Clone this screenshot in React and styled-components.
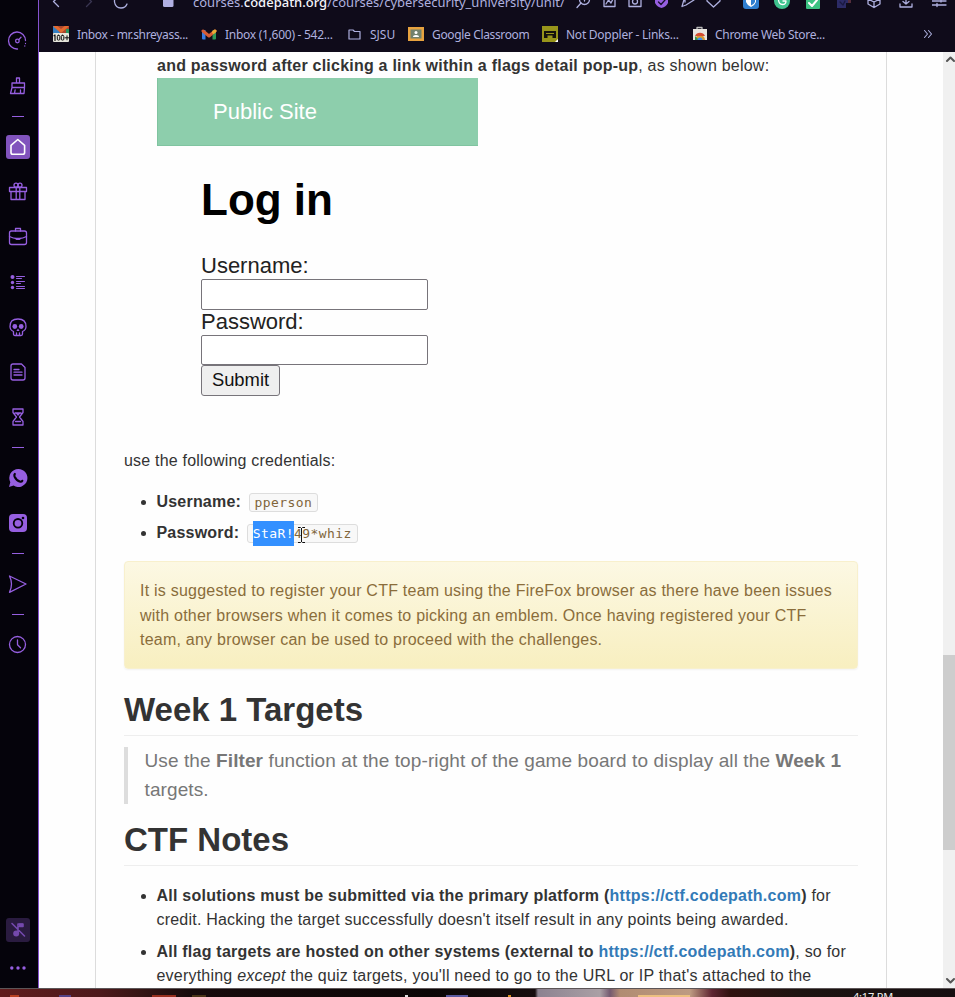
import React from "react";
import styled, { createGlobalStyle } from "styled-components";

const Global = createGlobalStyle`
  * { box-sizing: border-box; }
  html, body { margin: 0; padding: 0; overflow: hidden; background: #05030b; }
`;

const Screen = styled.div`
  width: 955px; height: 997px; display: flex; flex-direction: column; overflow: hidden;
  font-family: "Liberation Sans", Arial, sans-serif;
`;
const Browser = styled.div`
  display: flex; height: 988px; flex: none; min-height: 0;
`;
const Sidebar = styled.nav`
  width: 39px; flex: none; background: #05030b; border-right: 1px solid #8552ce;
  padding: 18.5px 2px 8px 0; display: flex; flex-direction: column; align-items: center;
`;
const SideItem = styled.div`
  height: 45px; width: 36px; flex: none; display: flex; align-items: center; justify-content: center;
`;
const Tile = styled.div`
  width: 24px; height: 24px; border-radius: 3px; background: ${(p) => p.$bg || "transparent"};
  color: ${(p) => p.$fg || "#965fe0"};
`;
const SideDivider = styled.div`
  height: 16px; flex: none; display: flex; align-items: center;
  &::after { content: ""; width: 12px; height: 1px; background: #965fe0; }
`;
const SideBottom = styled.div`
  margin-top: auto; display: flex; flex-direction: column; gap: 14px;
`;
const Svg = styled.svg`
  display: block; width: ${(p) => p.$w || 24}px; height: ${(p) => p.$h || 24}px; flex: none;
  fill: none; stroke: currentColor; stroke-width: 1.3; stroke-linejoin: round; stroke-linecap: round;
`;

const Main = styled.div`flex: 1; min-width: 0; display: flex; flex-direction: column;`;
const Toolbar = styled.header`
  height: 52px; flex: none; background: #0f0b1a; color: #aeb0df;
  font-family: "Noto Sans", "Open Sans", sans-serif;
`;
const AddressRow = styled.div`
  height: 14px; display: flex; align-items: flex-start; overflow: hidden;
`;
const TopSlot = styled.div`
  width: ${(p) => p.$w}px; height: 14px; flex: none; color: ${(p) => p.$fg || "#aeb0df"};
  transform: ${(p) => (p.$flip ? "scaleX(-1)" : "none")};
`;
const Url = styled.div`
  width: 383px; flex: none; font-size: 13px; line-height: 20px; margin-top: -8px; white-space: nowrap;
  letter-spacing: ${(p) => p.$ls}px;
  b { font-weight: 500; color: #f4f4fb; }
`;
const Bookmarks = styled.div`
  height: 38px; display: flex; align-items: center; padding: 2px 0 0 14px;
`;
const Bookmark = styled.div`
  width: ${(p) => p.$w}px; flex: none; display: flex; align-items: center; gap: 8px;
  white-space: nowrap; font-size: 12px; letter-spacing: ${(p) => p.$ls || 0}px;
`;

const Viewport = styled.div`flex: 1; min-height: 0; display: flex; background: #fefefe;`;
const PageArea = styled.div`flex: 1; min-width: 0; padding-left: 56px; overflow: hidden;`;
const Paper = styled.article`
  width: 792px; height: 936px; border: solid #dcdcdc; border-width: 0 1px;
  padding: 2px 28px 0; color: #333; font-size: 16px; letter-spacing: 0.2px; overflow: hidden;
`;
const Line = styled.div`
  height: ${(p) => p.$h || 24}px; line-height: ${(p) => p.$h || 24}px; white-space: nowrap;
  letter-spacing: ${(p) => p.$ls ?? 0.2}px;
`;
const Indented = styled.div`padding-left: 33px;`;
const LoginShot = styled.div`width: 321px; height: 352px; letter-spacing: 0; color: #222;`;
const SiteBanner = styled.div`
  height: 68px; line-height: 68px; padding-left: 55px; font-size: 22px; color: #fff;
  background: #8dceac; border: solid #80c4a0; border-width: 0 0 1px 1px;
`;
const LoginForm = styled.div`padding: 26px 0 0 44px; display: flex; flex-direction: column; align-items: flex-start;`;
const LoginTitle = styled.div`
  font-size: 44px; line-height: 56px; height: 81px; font-weight: bold; color: #000; letter-spacing: ${(p) => p.$ls}px;
`;
const FieldLabel = styled.label`font-size: 22px; line-height: ${(p) => p.$lh}px; height: ${(p) => p.$h}px;`;
const Field = styled.div`
  width: 226.5px; height: ${(p) => p.$h}px; border: 1px solid #77747a; border-radius: 2px; background: #fff;
`;
const SubmitButton = styled.div`
  width: 79px; height: 31px; line-height: 28px; text-align: center; font-size: 18.4px; color: #111;
  border: 1px solid #77747a; border-radius: 3px; background: #efefef;
`;
const Item = styled.div`
  position: relative; padding-left: 32.5px; margin-bottom: ${(p) => p.$mb || 0}px;
  &::before {
    content: ""; position: absolute; left: 17px; top: 10px; width: 5px; height: 5px;
    border-radius: 50%; background: #333;
  }
`;
const Code = styled.code`
  display: inline-block; height: 19px; line-height: 18px; padding: 0 5px; margin-left: ${(p) => p.$ml}px;
  border: 1px solid #ddd; border-radius: 3px; background: #f8f8f8; color: #80653a;
  font: 13px/18px "DejaVu Sans Mono", monospace; letter-spacing: ${(p) => p.$ls}px; vertical-align: 0;
  position: relative;
`;
const Selected = styled.span`background: #3390ff; color: #fff; padding: 5px 0 5px; line-height: 18px;`;
const TextCursor = styled.svg`
  position: absolute; left: 49px; top: 2px; width: 9px; height: 16px; fill: none; stroke: #111; stroke-width: 1;
`;
const Notice = styled.div`
  height: 108px; margin-top: 16px; padding: 17px 15px; color: #8a6d3b; border-radius: 4px;
  background: linear-gradient(#fcf8e3, #f8efc0); border: 1px solid #f8f0cd;
  box-shadow: 0 1px 2px rgba(0,0,0,.05); 
`;
const Heading = styled.h1`
  margin: ${(p) => p.$mt}px 0 0; height: 52px; line-height: 51px; font-size: 33px; font-weight: bold;
  color: #333; border-bottom: 1px solid #eee; white-space: nowrap; letter-spacing: ${(p) => p.$ls}px;
`;
const Quote = styled.blockquote`
  margin: 11px 0 0; height: 57px; padding-left: 16.5px; border-left: 4px solid #ddd; color: #777; font-size: 19px;
`;
const Link = styled.b`color: #337ab7;`;
const Notes = styled.div`margin-top: ${(p) => p.$mt ?? 18}px;`;
const Scrollbar = styled.div`
  width: 12px; flex: none; background: #f0f0f0; color: #555; display: flex; flex-direction: column;
  justify-content: space-between;
`;
const Thumb = styled.div`height: 195px; background: #cdcdcd; margin: 590px 0 auto;`;

const Taskbar = styled.footer`
  height: 9px; flex: none; border-top: 1px solid #5c5557; overflow: hidden; display: flex;
  background: linear-gradient(90deg, #601c1d 0, #4d191b 100px, #351514 140px, #170b0c 190px, #0b0606 430px,
    #160d0e 535px, #8c8290 538px, #aaa0a5 600px, #745a70 610px, #b18c72 620px, #bd9b82 690px, #5e2431 712px,
    #30120f 730px, #1d1411 800px, #150e10 955px);
  padding-left: 10px; color: #eee; font: 11px/14px "Noto Sans", sans-serif;
`;
const TaskMark = styled.div`
  width: ${(p) => p.$w}px; height: 2px; margin: 6px ${(p) => p.$mr}px 0 0; background: ${(p) => p.$c}; flex: none;
`;
const Clock = styled.span`white-space: nowrap; padding-top: 1px; letter-spacing: -0.2px;`;

const f = { fill: "currentColor", stroke: "none" };
const side = {
  gauge: <><path d="M11.500 20A8.500 8.500 0 1 1 19.500 11.500" /><path d="M19.500 14.500v.1M18.800 17v.1" /><circle cx="11.400" cy="12" r="1.800" /><path d="m12.800 10.600 2.200-2.300" /></>,
  broom: <><path d="M10.500 9V4h3v5M6 9h12.500v4.500H6zM6 13.500 4.500 19.500h13.500l.5-6M8.500 19.500l.6-3.500M14.500 19.500V16" /></>,
  home: <><path d="M5 10.300 11.800 4.500l6.800 5.800v7.200q0 1.800-1.800 1.800h-10Q5 19.300 5 17.500z" strokeWidth="1.600" /></>,
  gift: <><path d="M3.500 7.500h17v4h-17zM5 11.500v8h14v-8M10.200 7.500v12M13.800 7.500v12" /><circle cx="10" cy="5.200" r="2" /><circle cx="14" cy="5.200" r="2" /></>,
  work: <><rect x="3.500" y="6" width="17" height="13.500" rx="2" /><path d="M9.500 6V3.500h5V6M3.500 11.500q4 2 7 2h3q3 0 7-2" /><path d="M10.500 14h3" strokeWidth="2" /></>,
  list: <><g {...f}><circle cx="6.500" cy="7" r="2" /><circle cx="6.500" cy="12.500" r="1.700" /><circle cx="6.500" cy="17.500" r="1.700" /></g><path d="M10.500 6.500h8M10.500 8.500h5M10.500 11.500h8M10.500 13.500h4M10.500 16.500h8M10.500 18.500h8" strokeWidth="1" /></>,
  skull: <><path d="M7.500 19v-2.500Q4 15 4 11.500 4 4 12 4t8 7.500q0 3.500-3.500 5V19q0 1.500-1.500 1.500H9q-1.500 0-1.500-1.500z" /><circle cx="8.800" cy="11.500" r="2.400" {...f} /><circle cx="15.200" cy="11.500" r="2.400" {...f} /><path d="m12 13.500 1.600 2.400h-3.200z" {...f} /><path d="M10.500 18v2M13.500 18v2" /></>,
  doc: <><path d="M7 4h8.500L19 7.500V18q0 2-2 2H7q-2 0-2-2V6q0-2 2-2zM8 9.500h5M8 12.200h8M8 15h8" /></>,
  hour: <><path d="M7 4h10v3.500L13.500 12l3.500 4.500V20H7v-3.500l3.500-4.500L7 7.500zM9 8h6M9.500 16.500h5" /><path d="m9.500 8 2.500 3 2.500-3z" {...f} /></>,
  phone: <><path d="M12.300 3a9 9 0 1 1-4.700 16.600L3 21l1.300-4.800A9 9 0 0 1 12.300 3z" {...f} /><path d="M8.800 8q-.8.800-.2 2.600 1.700 4 5.700 5.100 1.400.2 2-.9" stroke="#05030b" strokeWidth="2.200" /></>,
  camera: <><rect x="3" y="3" width="18" height="18" rx="4" {...f} /><circle cx="12" cy="12.300" r="4.300" stroke="#05030b" strokeWidth="1.800" /><circle cx="17" cy="7" r="1.300" fill="#05030b" stroke="none" /></>,
  send: <path d="M3.500 4 20 12 3.500 20.300Q7.500 12 3.500 4z" />,
  clock: <><circle cx="11.500" cy="11.500" r="8" /><path d="M11.500 7v4.800l3 3" /></>,
  mute: <><path d="M12 14V6h5v2.500h-3.500M6 5.500l12.500 12.500" strokeWidth="1.600" /><path d="M13 5.500h4v3.500h-4z" {...f} /><circle cx="10.200" cy="15.500" r="3" {...f} /></>,
  dots: <g {...f}><circle cx="5.800" cy="12" r="1.700" /><circle cx="12" cy="12" r="1.700" /><circle cx="18" cy="12" r="1.700" /></g>,
};
const sideItems = ["gauge", "broom", "-", "home", "gift", "work", "list", "skull", "doc", "hour", "-", "phone", "camera", "-", "send", "-", "clock"];

const SideIcon = ({ name, bg, fg }) => (
  <Tile $bg={bg} $fg={fg}><Svg viewBox="0 0 24 24">{side[name]}</Svg></Tile>
);

const top = {
  back: <path d="m7.500-4-6 5.500L6.500 6.500" />,
  reload: <path d="M1.500-2v4q1 6 6.500 6 4.500 0 6-4" />,
  page: <rect x="0" y="-4" width="10.500" height="11" rx="1.500" {...f} />,
  search: <><circle cx="8.500" cy="-.5" r="5" /><path d="m5 3-4 4.500M8.500-2v3" /></>,
  image: <><path d="M1-2v8.500h11V-2" /><path d="m3 4 2.500-4 2.500 3L10-1" /></>,
  snap: <><path d="M1-2v8.500h12V-2" /><circle cx="7" cy="1.500" r="2.500" /></>,
  shield: <><path d="M0-3h13v6Q11 7 6.500 8 2 7 0 3z" {...f} /><path d="m3.500 2 2.500 2.500 4-4.500" stroke="#17102a" /></>,
  plane: <path d="m1 6.500 2-7M1 6.500l4-1.500 8-5M4-1v3" />,
  heart: <path d="M1-2v3l6.500 6L14 1v-3" />,
  bit: <><rect y="-6" width="16" height="15" rx="3" {...f} /><path d="M3-2h10v4q-1 3-5 5-4-2-5-5z" fill="#fff" stroke="none" /><path d="M8-2h4v4q-1 2-4 3.500z" {...f} /></>,
  gram: <><circle cx="8" cy="1" r="8" {...f} /><path d="M4.500-1q0 5.500 4 5.500Q12 4.500 12 1H9" stroke="#fff" /></>,
  check: <><rect y="-3" width="14" height="12" rx="1" {...f} /><path d="m3 3 3 3 5-6" stroke="#fff" strokeWidth="2" /></>,
  dark: <><path d="M0-3h14v6H9v5H0z" {...f} /><path d="m3 2 3 3 2-4" stroke="#1a1940" /><path d="M11-3h3v6h-3z" fill="#542d3c" stroke="none" /></>,
  cube: <path d="M1-2v6l6 3.500L13 4v-6M1-1l6 3 6-3M7 2v5.500" />,
  down: <path d="M1 4v3h12V4M7-2v6M4 1.500 7 4l3-2.500" />,
  tune: <path d="M0 1h14M0 5h14M9-1v3M5 3.500v3" />,
};
const TopIcon = ({ name, w, fg }) => (
  <TopSlot $w={w} $fg={fg}><Svg $w={16} $h={14} viewBox="0 0 16 14">{top[name]}</Svg></TopSlot>
);

const marks = {
  mail: <><path d="M1 4h3.500v9.500H2q-1 0-1-1z" fill="#367be2" stroke="none" /><path d="M11.500 4H15v8.500q0 1-1 1h-2.500z" fill="#2d9a58" stroke="none" /><path d="M2 5 8 10l6-5" stroke="#d65c35" strokeWidth="3" /><path d="M12.500 6.300 14 5" stroke="#e9ac35" strokeWidth="3" /></>,
  badge: <><path d="M0 0h16v8H0z" fill="#a9472d" stroke="none" /><path d="M0 0h3l4 7H0z" fill="#347fc1" stroke="none" /><path d="m2 0 6 5 6-5" stroke="#e36a2f" strokeWidth="3" /><path d="M13 3h3v5h-3z" fill="#28945c" stroke="none" /><rect y="7" width="16" height="9" rx="1" fill="#e6e6dc" stroke="none" /><path d="M2 9v5.500M1 9.700 2 9" stroke="#111" strokeWidth="1.200" /><rect x="4.300" y="9.300" width="2.500" height="4.800" rx="1" stroke="#111" strokeWidth="1" /><rect x="8.300" y="9.300" width="2.500" height="4.800" rx="1" stroke="#111" strokeWidth="1" /><path d="M12 11.800h4M14 9.800v4" stroke="#111" strokeWidth="1" /></>,
  folder: <path d="M1 4h4l1.500 1.500H12V13H1z" strokeWidth="1.200" />,
  room: <><rect y="1" width="16" height="14" fill="#e7a23f" stroke="none" /><rect x="2.500" y="3.500" width="11" height="9" fill="#71816e" stroke="none" /><circle cx="8" cy="6.500" r="1.500" fill="#fff" stroke="none" /><path d="M5 11q0-2 3-2t3 2z" fill="#fff" stroke="none" /></>,
  doppler: <><rect width="16" height="16" fill="#98951b" stroke="none" /><path d="M2 5h12v7h-3.500V9.500h-5V12H2z" fill="#15120d" stroke="none" /><path d="M4 7h8v1H4z" fill="#98951b" stroke="none" /><path d="M16 13v3h-3z" fill="#fff" stroke="none" /></>,
  store: <><path d="M5 4V1.500h5V4" stroke="#bbb" /><path d="M1 3h14v11H1z" fill="#e7e5e0" stroke="none" /><path d="M3 14a5 5 0 0 1 10 0z" fill="#d79a35" stroke="none" /><path d="M3 10a5.500 5.500 0 0 1 10 0z" fill="#d44b30" stroke="none" /><path d="M3 14v-4l4 4z" fill="#359450" stroke="none" /><path d="M5.500 14a2.500 2.500 0 0 1 5 0z" fill="#368df0" stroke="none" /></>,
};
const bookmarks = [
  ["badge", "Inbox - mr.shreyass...", 148, 16, -0.33], ["mail", "Inbox (1,600) - 542...", 147, 16, -0.27],
  ["folder", "SJSU", 60, 14, 0], ["room", "Google Classroom", 134, 16, -0.35],
  ["doppler", "Not Doppler - Links...", 150, 16, -0.25], ["store", "Chrome Web Store...", 231, 15, -0.3],
];

const site = <Link>https://ctf.codepath.com</Link>;

export default function App() {
  return (
    <Screen>
      <Global />
      <Browser>
        <Sidebar>
          {sideItems.map((n, i) => n === "-" ? <SideDivider key={i} /> : (
            <SideItem key={i}><SideIcon name={n} bg={n === "home" ? "#8153bd" : undefined} fg={n === "home" ? "#fff" : undefined} /></SideItem>
          ))}
          <SideBottom><SideIcon name="mute" bg="#2a1b40" fg="#7449ad" /><SideIcon name="dots" /></SideBottom>
        </Sidebar>
        <Main>
          <Toolbar>
            <AddressRow>
              <TopSlot $w={13} />
              <TopIcon name="back" w={33} />
              <TopSlot $w={28} $fg="#393551"><Svg $w={16} $h={14} viewBox="0 0 16 14"><path d="m.5-4 6 5.500L1.500 6.500" /></Svg></TopSlot>
              <TopIcon name="reload" w={50} />
              <TopIcon name="page" w={30} fg="#b1b0e2" />
              <Url $ls={0}>courses.<b>codepath.org</b>/courses/cybersecurity_university/unit/</Url>
              <TopIcon name="search" w={27} /><TopIcon name="image" w={25} /><TopIcon name="snap" w={27} />
              <TopIcon name="shield" w={26} fg="#965fe0" /><TopIcon name="plane" w={25} /><TopIcon name="heart" w={37} />
              <TopIcon name="bit" w={31} fg="#2f7fd0" /><TopIcon name="gram" w={32} fg="#3fc38e" />
              <TopIcon name="check" w={31} fg="#3dc282" /><TopIcon name="dark" w={30} fg="#2c2b66" />
              <TopIcon name="cube" w={32} /><TopIcon name="down" w={33} /><TopIcon name="tune" w={16} />
            </AddressRow>
            <Bookmarks>
              {bookmarks.map(([icon, text, w, iw, ls]) => (
                <Bookmark key={text} $w={w} $ls={ls}>
                  <Svg $w={iw} $h={16} viewBox={`0 0 ${iw} 16`}>{marks[icon]}</Svg>{text}
                </Bookmark>
              ))}
              <Svg $w={12} $h={12} viewBox="0 0 12 12"><path d="m1.500 2.500 3 3.500-3 3.500M5.500 2.500l3 3.500-3 3.500" strokeWidth="1.100" /></Svg>
            </Bookmarks>
          </Toolbar>
          <Viewport>
            <PageArea>
              <Paper>
                <Indented>
                  <Line $ls={0.23}><b>and password after clicking a link within a flags detail pop-up</b>, as shown below:</Line>
                  <LoginShot>
                    <SiteBanner>Public Site</SiteBanner>
                    <LoginForm>
                      <LoginTitle $ls={0}>Log in</LoginTitle>
                      <FieldLabel $lh={26} $h={26}>Username:</FieldLabel><Field $h={31} />
                      <FieldLabel $lh={24} $h={25}>Password:</FieldLabel><Field $h={30} />
                      <SubmitButton>Submit</SubmitButton>
                    </LoginForm>
                  </LoginShot>
                </Indented>
                <Notes $mt={19}>
                  <Line>use the following credentials:</Line>
                </Notes>
                <Notes $mt={17}>
                  <Item $mb={7}><Line><b>Username:</b><Code $ml={7.5} $ls={0.42}>pperson</Code></Line></Item>
                  <Item><Line><b>Password:</b><Code $ml={7.5} $ls={0.42}><Selected>StaR!</Selected>49*whiz
                    <TextCursor viewBox="0 0 9 16"><path d="M1 .5h2.500l1 1 1-1H8M4.500 1v14M1 15.500h2.500l1-1 1 1H8" /></TextCursor>
                  </Code></Line></Item>
                </Notes>
                <Notice>
                  <Line $h={24.5} $ls={0.23}>It is suggested to register your CTF team using the FireFox browser as there have been issues</Line>
                  <Line $h={24.5} $ls={0.23}>with other browsers when it comes to picking an emblem. Once having registered your CTF</Line>
                  <Line $h={24.5} $ls={0.23}>team, any browser can be used to proceed with the challenges.</Line>
                </Notice>
                <Heading $mt={15} $ls={0}>Week 1 Targets</Heading>
                <Quote>
                  <Line $h={28.5} $ls={0.1}>Use the <b>Filter</b> function at the top-right of the game board to display all the <b>Week 1</b></Line>
                  <Line $h={28.5} $ls={0.1}>targets.</Line>
                </Quote>
                <Heading $mt={10} $ls={0}>CTF Notes</Heading>
                <Notes>
                  <Item $mb={8}>
                    <Line $ls={0.24}><b>All solutions must be submitted via the primary platform ({site})</b> for</Line>
                    <Line $ls={0.21}>credit. Hacking the target successfully doesn't itself result in any points being awarded.</Line>
                  </Item>
                  <Item>
                    <Line $ls={0.23}><b>All flag targets are hosted on other systems (external to {site})</b>, so for</Line>
                    <Line $ls={0.215}>everything <i>except</i> the quiz targets, you'll need to go to the URL or IP that's attached to the</Line>
                  </Item>
                </Notes>
              </Paper>
            </PageArea>
            <Scrollbar>
              <Svg $w={12} $h={13} viewBox="0 0 12 13"><path d="m4 9 3.500-3.500L11 9" strokeWidth="2" /></Svg>
              <Thumb />
              <Svg $w={12} $h={14} viewBox="0 0 12 14"><path d="m4 5 3.500 3.500L11 5" strokeWidth="2" /></Svg>
            </Scrollbar>
          </Viewport>
        </Main>
      </Browser>
      <Taskbar>
        <TaskMark $w={9} $mr={40} $c="#b84022" /><TaskMark $w={12} $mr={81} $c="#554286" />
        <TaskMark $w={24} $mr={16} $c="#98301f" /><TaskMark $w={14} $mr={199} $c="#4a3518" />
        <TaskMark $w={3} $mr={38} $c="#ddd" /><TaskMark $w={22} $mr={40} $c="#5b5aa0" />
        <TaskMark $w={3} $mr={127} $c="#d89020" /><TaskMark $w={52} $mr={163} $c="#edc080" />
        <Clock>4:17 PM</Clock>
      </Taskbar>
    </Screen>
  );
}
